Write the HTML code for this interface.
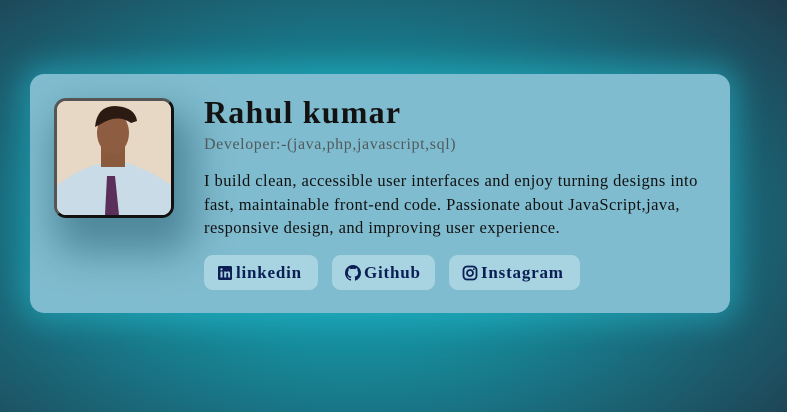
<!DOCTYPE html>
<html><head><meta charset="utf-8"><style>
html,body{margin:0;padding:0;width:787px;height:412px;overflow:hidden}
body{background:radial-gradient(ellipse 75% 85% at 45% 55%,#17a3b5 0%,#168c9c 35%,#1b5f70 70%,#1f3a4a 100%);font-family:"Liberation Serif",serif;position:relative}
.card{position:absolute;left:30px;top:74px;width:700px;height:239px;background:#80bccf;border-radius:14px;box-shadow:0 0 30px 8px rgba(40,200,220,.45)}
.photo{position:absolute;left:24px;top:24px;width:114px;height:114px;border:3px solid #111;border-top-color:#555;border-left-color:#555;border-radius:12px;overflow:hidden;background:#e4d6c3;box-shadow:10px 25px 40px 10px rgba(20,70,90,.45)}
.name{position:absolute;left:174px;top:20px;font-size:32px;font-weight:bold;color:#121212;margin:0;letter-spacing:1.2px}
.sub{position:absolute;left:174px;top:62px;font-size:16px;color:#4f5a5e;letter-spacing:0.6px}
.desc{position:absolute;left:174px;top:95px;width:530px;font-size:16.5px;line-height:23.5px;color:#111;letter-spacing:0.45px}
.btn{position:absolute;top:181px;height:35px;background:#a8d3e1;border-radius:9px;color:#0b1f55;font-weight:bold;font-size:17px;line-height:35px;box-sizing:border-box;padding-left:13px;display:flex;align-items:center;gap:3px;letter-spacing:0.8px}
.btn svg{width:16px;height:16px}
</style></head><body>
<div class="card">
 <div class="photo">
  <svg width="114" height="114" viewBox="0 0 114 114">
   <rect width="114" height="114" fill="#e6d8c5"/>
   <path d="M0 114 L0 85 Q20 68 45 62 L70 62 Q95 70 114 84 L114 114Z" fill="#c9dbe6"/>
   <path d="M50 75 L58 75 L62 114 L48 114Z" fill="#5a2f5a"/>
   <rect x="44" y="44" width="24" height="22" fill="#8a5a3e"/>
   <ellipse cx="56" cy="32" rx="16" ry="21" fill="#8e5c40"/>
   <path d="M38 26 Q40 5 58 5 Q78 6 80 20 L74 22 Q60 12 42 24Z" fill="#2a1a12"/>
  </svg>
 </div>
 <div class="name">Rahul kumar</div>
 <div class="sub">Developer:-(java,php,javascript,sql)</div>
 <div class="desc">I build clean, accessible user interfaces and enjoy turning designs into<br>fast, maintainable front-end code. Passionate about JavaScript,java,<br>responsive design, and improving user experience.</div>
 <div class="btn" style="left:174px;width:114px"><svg viewBox="0 0 16 16"><rect x="1" y="1" width="14" height="14" rx="1.5" fill="#0b1f55"/><rect x="3.5" y="6.5" width="2" height="6" fill="#a8d3e1"/><circle cx="4.5" cy="4.3" r="1.1" fill="#a8d3e1"/><path d="M7.2 6.5h1.9v1c.4-.7 1.1-1.1 2-1.1 1.5 0 2 .9 2 2.4v3.7h-2V9c0-.7-.2-1.1-.8-1.1-.6 0-1 .4-1 1.2v3.4h-2.1z" fill="#a8d3e1"/></svg>linkedin</div>
 <div class="btn" style="left:302px;width:103px"><svg viewBox="0 0 16 16"><path fill="#0b1f55" d="M8 0C3.58 0 0 3.58 0 8c0 3.54 2.29 6.53 5.47 7.59.4.07.55-.17.55-.38v-1.33c-2.23.48-2.7-1.07-2.7-1.07-.36-.92-.89-1.17-.89-1.17-.73-.5.05-.49.05-.49.8.06 1.23.83 1.23.83.71 1.23 1.87.87 2.33.66.07-.52.28-.87.51-1.07-1.78-.2-3.64-.89-3.64-3.95 0-.87.31-1.59.82-2.15-.08-.2-.36-1.02.08-2.12 0 0 .67-.21 2.2.82A7.6 7.6 0 0 1 8 3.87c.68 0 1.36.09 2 .27 1.53-1.04 2.2-.82 2.2-.82.44 1.1.16 1.92.08 2.12.51.56.82 1.27.82 2.15 0 3.07-1.87 3.75-3.65 3.95.29.25.54.73.54 1.48v2.2c0 .21.15.46.55.38A8 8 0 0 0 16 8c0-4.42-3.58-8-8-8z"/></svg>Github</div>
 <div class="btn" style="left:419px;width:131px"><svg viewBox="0 0 16 16"><rect x="1.5" y="1.5" width="13" height="13" rx="3.5" fill="none" stroke="#0b1f55" stroke-width="1.8"/><circle cx="8" cy="8" r="3" fill="none" stroke="#0b1f55" stroke-width="1.8"/><circle cx="11.8" cy="4.2" r=".9" fill="#0b1f55"/></svg>Instagram</div>
</div>
</body></html>
